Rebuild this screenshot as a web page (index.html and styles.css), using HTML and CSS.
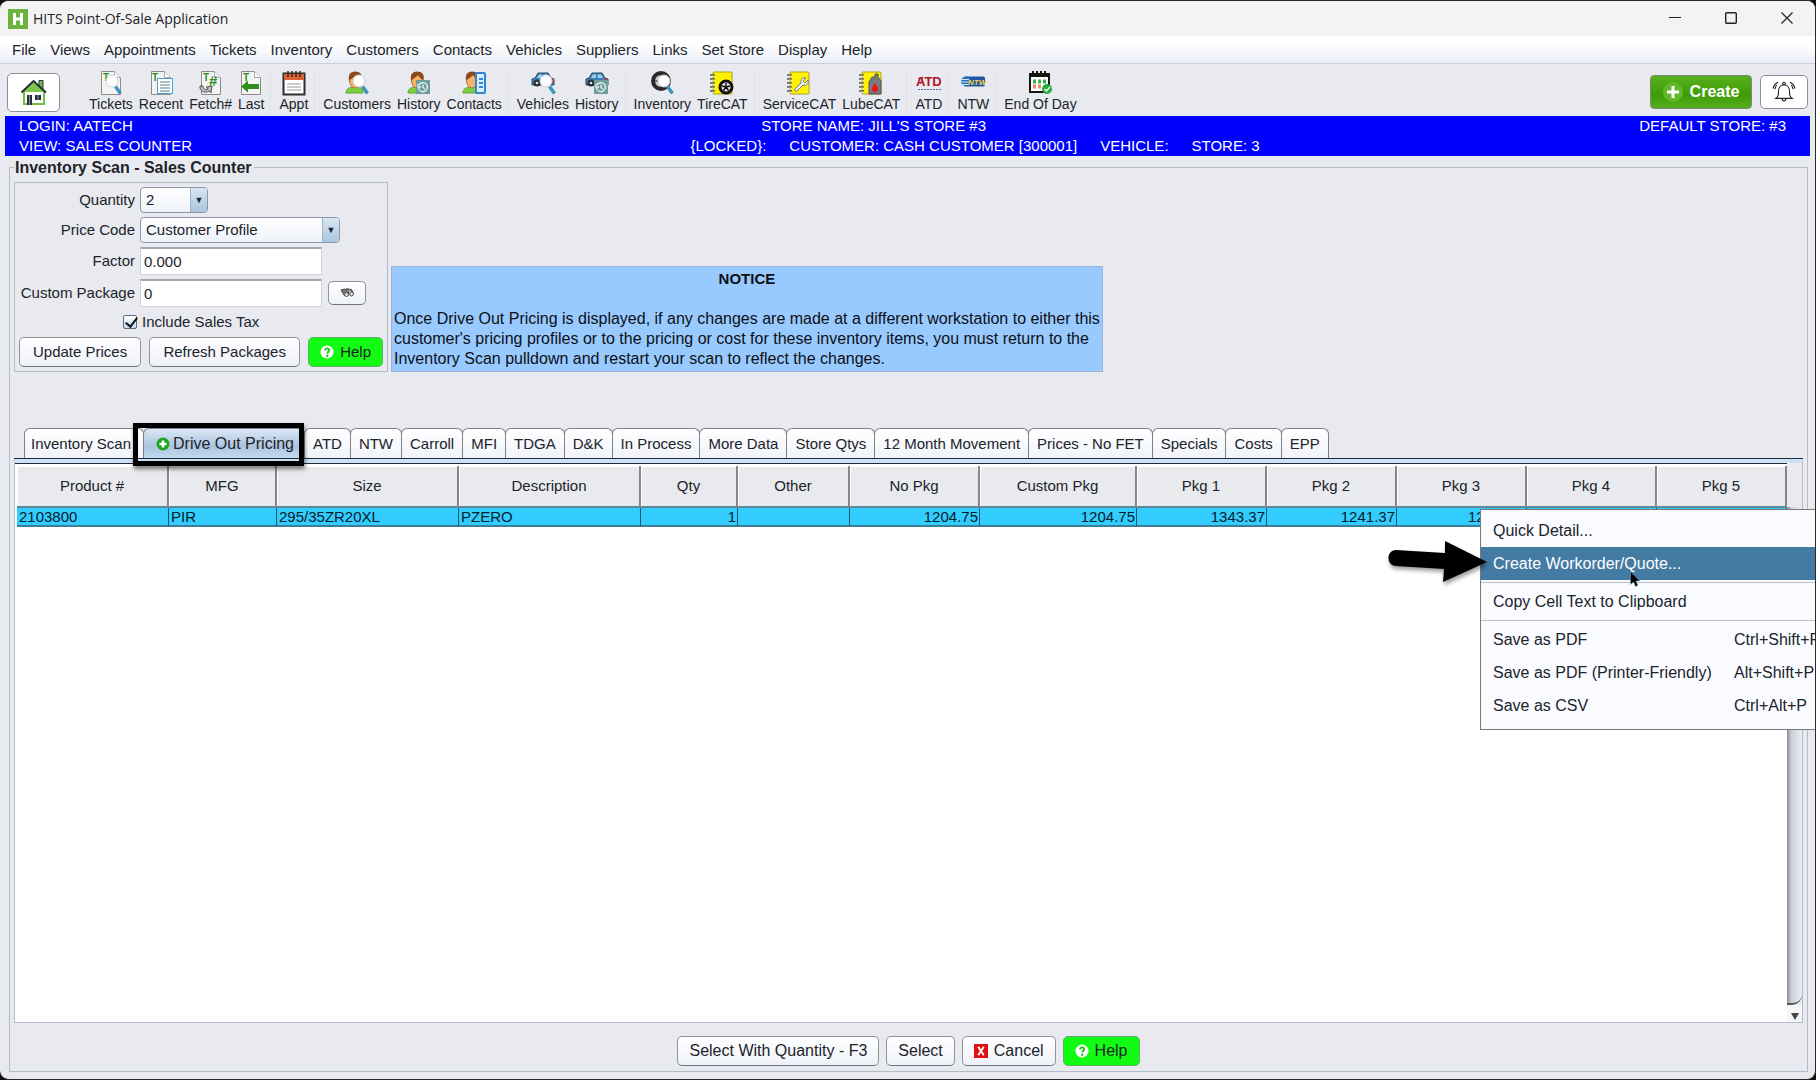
FILE: index.html
```html
<!DOCTYPE html>
<html lang="en">
<head>
<meta charset="UTF-8">
<meta name="viewport" content="width=device-width, initial-scale=1.0">
<title>HITS Point-Of-Sale Application</title>
<link rel="stylesheet" href="styles.css">
</head>
<body>

<!-- shared icon shapes -->
<svg class="sprites" aria-hidden="true">
    <symbol id="page" viewBox="0 0 24 24">
        <path d="M2.500.5h13l6 6v17h-19z" fill="#f4f4f4" stroke="#8b8b8b"/>
        <path d="M15.500.5v6h6" fill="#fff" stroke="#aaa"/>
    </symbol>
    <symbol id="lens" viewBox="0 0 24 24">
        <path d="M16.500 15.500l5 7" stroke="#3f93bd" stroke-width="3.500"/>
        <circle cx="13" cy="10" r="6" fill="#fdfdfd" stroke="#cfd4d8"/>
    </symbol>
    <symbol id="person" viewBox="0 0 24 24">
        <path d="M1 22c0-4 3-6 8-6h3c4 0 6 2 6 6z" fill="#7ccf3f" stroke="#5aa52c"/>
        <ellipse cx="10" cy="9.500" rx="5.500" ry="7.500" fill="#f6b268" stroke="#b5763a"/>
        <path d="M4 10C3 4 5 .5 10 .5s8 3 6.500 9C14 8 12 6 11 4 9 7 6 7 4 10z" fill="#8a4b20"/>
    </symbol>
    <symbol id="clock" viewBox="0 0 24 24">
        <rect x="9" y="9" width="14" height="14" fill="#6f9c9c"/>
        <path d="M12 14a4.500 4.500 0 1 1-.5 3M11 13v3h3M16 13.500v3l2 1.500" fill="none" stroke="#e6f4f2" stroke-width="1.300"/>
    </symbol>
    <symbol id="car" viewBox="0 0 24 24">
        <path d="M4 7l3-5h10l3 5 3 1v6H1V8z" fill="#3d7fb4" stroke="#2a4a63"/>
        <path d="M6 7l2-3.500h3V7zM12.500 7V3.500H16l2 3.500z" fill="#9fd0ee"/>
        <circle cx="6" cy="12" r="3.500" fill="#2b2f33"/><circle cx="6" cy="12" r="1.300" fill="#ddd"/>
        <path d="M20 8h3v3h-3z" fill="#d43a2c"/>
    </symbol>
    <symbol id="book" viewBox="0 0 24 24">
        <rect x="3" y="1" width="19" height="22" rx="1" fill="#fff200" stroke="#aaa01f"/>
        <path d="M0 4h5M0 8h5M0 12h5M0 16h5M0 20h5" stroke="#555" stroke-width="1.500"/>
        <path d="M2 5.200h3M2 9.200h3M2 13.200h3M2 17.200h3M2 21.200h3" stroke="#ddd"/>
    </symbol>
    <symbol id="help" viewBox="0 0 14 14">
        <circle cx="7" cy="7" r="6.500" fill="#fff"/>
        <path d="M5 5.500C5 2.500 9.500 2.800 9.300 5.300 9.200 6.700 7.200 6.800 7.200 8.600" fill="none" stroke="#12c912" stroke-width="1.800"/>
        <circle cx="7.200" cy="10.700" r="1.200" fill="#12c912"/>
    </symbol>
</svg>

<div class="window">
    <header class="title-bar">
        <svg class="app-logo" viewBox="0 0 20 20"><rect width="20" height="20" fill="#6cb33e"/><path d="M6.500 4v12M13.500 4v12M6 10h8" stroke="#fff" stroke-width="3"/></svg>
        <span class="app-name">HITS Point-Of-Sale Application</span>
        <button class="window-button" aria-label="Minimize"><svg viewBox="0 0 12 12"><path d="M0 5.500h12" stroke="#222"/></svg></button>
        <button class="window-button" aria-label="Maximize"><svg viewBox="0 0 12 12"><rect x=".7" y=".7" width="10.600" height="10.600" rx="1" fill="none" stroke="#222" stroke-width="1.400"/></svg></button>
        <button class="window-button" aria-label="Close"><svg viewBox="0 0 12 12"><path d="M.5.5l11 11M11.500.5l-11 11" stroke="#222" stroke-width="1.200"/></svg></button>
    </header>

    <nav class="menu-bar">
        <a href="#">File</a>
        <a href="#">Views</a>
        <a href="#">Appointments</a>
        <a href="#">Tickets</a>
        <a href="#">Inventory</a>
        <a href="#">Customers</a>
        <a href="#">Contacts</a>
        <a href="#">Vehicles</a>
        <a href="#">Suppliers</a>
        <a href="#">Links</a>
        <a href="#">Set Store</a>
        <a href="#">Display</a>
        <a href="#">Help</a>
    </nav>

    <div class="toolbar">
        <button class="home-button" aria-label="Home">
            <svg viewBox="0 0 28 28">
                <path d="M4 13h20v13H4z" fill="#fff" stroke="#6fbf44" stroke-width="2"/>
                <path d="M19 2.500h4V11h-4z" fill="#6fbf44" stroke="#243038"/>
                <path d="M1.500 14L13.500 2l12.500 12z" fill="#79c74c"/>
                <path d="M1.500 14.500L13.500 3 26 14.500" fill="none" stroke="#243038" stroke-width="2"/>
                <path d="M7 17h5v10H7zM15 17h6v5h-6z" fill="#243038"/>
                <path d="M18 17v5M9.500 17v10" stroke="#8a9298"/>
            </svg>
        </button>

        <div class="tools">
            <button class="tool"><svg viewBox="0 0 24 24"><use href="#page"/><text class="tee" x="4" y="10">T</text><use href="#lens"/></svg>Tickets</button>
            <button class="tool"><svg viewBox="0 0 24 24"><use href="#page"/><text class="tee" x="3" y="10">T</text><rect x="8.500" y="7.500" width="15" height="15" fill="#fff" stroke="#4aa3cf"/><path d="M11 11h10M11 14h10M11 17h10M11 20h10" stroke="#5b7a8c"/></svg>Recent</button>
            <button class="tool"><svg viewBox="0 0 24 24"><use href="#page"/><text class="tee" x="4" y="10">T</text><text class="hash" x="10" y="15">#</text><path d="M1 15c-1 5 5 8 9 5l2 2 1-7-6 1 2 2c-3 1-5 0-5-3z" fill="#b9b9b9" stroke="#555"/></svg>Fetch#</button>
            <button class="tool"><svg viewBox="0 0 24 24"><use href="#page"/><text class="tee" x="4" y="10">T</text><path d="M2 15.500l7-6v3.500h11v5H9v3.500z" fill="#2f8f1d"/></svg>Last</button>
            <span class="tool-gap"></span>
            <button class="tool"><svg viewBox="0 0 24 24"><rect x="1.500" y="2.500" width="21" height="21" fill="#fff" stroke="#2d2d2d" stroke-width="2"/><path d="M2 3h20v6H2z" fill="#dd6137"/><path d="M6 0v6M10 0v6M14 0v6M18 0v6" stroke="#3b2620" stroke-width="1.500"/><path d="M5 13h14M5 16h14M5 19h14" stroke="#9a9a9a"/></svg>Appt</button>
            <span class="tool-gap"></span>
            <button class="tool"><svg viewBox="0 0 24 24"><use href="#person"/><use href="#lens" x="1"/></svg>Customers</button>
            <button class="tool"><svg viewBox="0 0 24 24"><use href="#person"/><use href="#clock"/></svg>History</button>
            <button class="tool"><svg viewBox="0 0 24 24"><use href="#person"/><rect x="14" y="2" width="9" height="20" rx="1" fill="#dcefff" stroke="#2f86d6" stroke-width="2"/><path d="M17 8h4M17 12h4M17 16h4" stroke="#2f86d6" stroke-width="2"/></svg>Contacts</button>
            <span class="tool-gap"></span>
            <button class="tool"><svg viewBox="0 0 24 24"><use href="#car"/><use href="#lens" x="2"/></svg>Vehicles</button>
            <button class="tool"><svg viewBox="0 0 24 24"><use href="#car"/><use href="#clock"/></svg>History</button>
            <span class="tool-gap"></span>
            <button class="tool"><svg viewBox="0 0 24 24"><circle cx="11" cy="10" r="8" fill="#ccc" stroke="#2a2a2a" stroke-width="4"/><path d="M11 4v12M5 10h12" stroke="#555" stroke-width="1.500"/><use href="#lens" x="1"/></svg>Inventory</button>
            <button class="tool"><svg viewBox="0 0 24 24"><use href="#book"/><circle cx="16" cy="16" r="6" fill="#e6e6e6" stroke="#111" stroke-width="3"/><path d="M16 12v4l4-1M16 16l2.500 3.500M16 16l-2.500 3.500M16 16l-4-1" stroke="#111" stroke-width="1.500" fill="none"/></svg>TireCAT</button>
            <span class="tool-gap"></span>
            <button class="tool"><svg viewBox="0 0 24 24"><use href="#book"/><path d="M8 18l6-6c-1-4 2-6 5-5l-3 3 2 2 3-3c1 3-1 6-5 5l-6 6c-2 1-3-1-2-2z" fill="#f1f1f1" stroke="#777"/></svg>ServiceCAT</button>
            <button class="tool"><svg viewBox="0 0 24 24"><use href="#book"/><path d="M10 11l3-5h3V3h3v3l3 4v13H10z" fill="#777b7f" stroke="#555"/><path d="M16 12c2 3 3 4 3 6a3 3 0 0 1-6 0c0-2 1-3 3-6z" fill="#f01414"/></svg>LubeCAT</button>
            <span class="tool-gap"></span>
            <button class="tool"><svg viewBox="0 0 24 24"><text class="atd" x="-1" y="15">ATD</text><path d="M1 8l5-2-3 7" fill="none" stroke="#c01e2d"/><path d="M1 18.500h23" stroke="#5b6b9c" stroke-dasharray="2 1"/></svg>ATD</button>
            <span class="tool-gap"></span>
            <button class="tool"><svg viewBox="0 0 24 24"><rect x="3" y="5.500" width="21" height="10" rx="2" fill="#1f57a3"/><circle cx="5" cy="10.500" r="5" fill="#2d6fb9"/><path d="M0 8.500h8M0 11h8M0 13.500h8" stroke="#cfe3f5"/><text class="ntw" x="7" y="14">NTW</text></svg>NTW</button>
            <span class="tool-gap"></span>
            <button class="tool"><svg viewBox="0 0 24 24"><rect x="2" y="3" width="19" height="18" fill="#fff" stroke="#151515" stroke-width="2"/><path d="M1 5h21M5 0v6M9 0v6M13 0v6M17 0v6" stroke="#151515" stroke-width="2"/><path d="M5 10.500h13" stroke="#35b34a" stroke-width="4" stroke-dasharray="3 2"/><path d="M5 15.500h10" stroke="#f0857a" stroke-width="4" stroke-dasharray="3 2"/><circle cx="19" cy="18" r="5" fill="#22a93a"/><path d="M16.500 18l2 2 3.500-4" fill="none" stroke="#fff" stroke-width="1.500"/></svg>End Of Day</button>
        </div>

        <button class="create-button"><svg viewBox="0 0 20 20"><circle cx="10" cy="10" r="10" fill="#62b92b"/><path d="M10 4v12M4 10h12" stroke="#fff" stroke-width="3"/></svg>Create</button>
        <button class="bell-button" aria-label="Notifications">
            <svg viewBox="0 0 24 24" fill="none" stroke="#222" stroke-width="1.200"><path d="M3 20c3-2 3-4 3-8 0-9 12-9 12 0 0 4 0 6 3 8zM10 20.500c0 3 4 3 4 0"/><circle cx="12" cy="4" r="1.500"/><path d="M4 5.500C2.800 7 2.300 8.500 2.200 10M5.500 2.500C2.500 4 .5 6.500 0 9.500M20 5.500c1.200 1.500 1.700 3 1.800 4.500M18.500 2.500C21.500 4 23.500 6.500 24 9.500"/></svg>
        </button>
    </div>

    <div class="status">
        <div class="status-line status-store">
            <span>LOGIN: AATECH</span>
            <span>STORE NAME: JILL'S STORE #3</span>
            <span>DEFAULT STORE: #3</span>
        </div>
        <div class="status-line status-view">
            <span>VIEW: SALES COUNTER</span>
            <span class="status-fields"><span>{LOCKED}:</span><span>CUSTOMER: CASH CUSTOMER [300001]</span><span>VEHICLE:</span><span>STORE: 3</span></span>
        </div>
    </div>

    <fieldset class="scan">
        <legend>Inventory Scan - Sales Counter</legend>

        <div class="scan-top">
            <form class="pricing">
                <label for="quantity">Quantity</label>
                <div class="field"><span class="combo combo-small"><select id="quantity"><option>2</option></select></span></div>
                <label for="price-code">Price Code</label>
                <div class="field"><span class="combo"><select id="price-code"><option>Customer Profile</option></select></span></div>
                <label for="factor">Factor</label>
                <div class="field"><input class="text-box" type="text" id="factor" value="0.000"></div>
                <label for="package">Custom Package</label>
                <div class="field">
                    <input class="text-box" type="text" id="package" value="0">
                    <button class="btn find-button" type="button" aria-label="Find package"><svg viewBox="0 0 14 10"><path d="M1 2l4-1 4 3-2 4-3-1z" fill="#777" stroke="#444"/><circle cx="6.500" cy="6.500" r="2" fill="#ddd" stroke="#555"/><path d="M6 1l5 1 2 3" fill="none" stroke="#666" stroke-width="2"/><circle cx="11.500" cy="6" r="2" fill="#ddd" stroke="#555"/></svg></button>
                </div>
                <div class="tax-row"><input type="checkbox" id="tax" checked><label for="tax">Include Sales Tax</label></div>
                <div class="pricing-buttons">
                    <button class="btn btn-wide" type="button">Update Prices</button>
                    <button class="btn btn-wide" type="button">Refresh Packages</button>
                    <button class="btn btn-help" type="button"><svg viewBox="0 0 14 14"><use href="#help"/></svg>Help</button>
                </div>
            </form>

            <div class="notice">
                <h2>NOTICE</h2>
                <p>Once Drive Out Pricing is displayed, if any changes are made at a different workstation to either this<br>customer's pricing profiles or to the pricing or cost for these inventory items, you must return to the<br>Inventory Scan pulldown and restart your scan to reflect the changes.</p>
            </div>
        </div>

        <div class="tabs">
            <button class="tab tab-scan">Inventory Scan</button>
            <button class="tab tab-active">
                <svg viewBox="0 0 14 14"><circle cx="7" cy="7" r="6.500" fill="#1fa81f"/><path d="M7 3.500v7M3.500 7h7" stroke="#fff" stroke-width="2.500"/></svg>Drive Out Pricing
                <span class="highlight-box"></span>
            </button>
            <button class="tab">ATD</button>
            <button class="tab">NTW</button>
            <button class="tab">Carroll</button>
            <button class="tab">MFI</button>
            <button class="tab">TDGA</button>
            <button class="tab">D&amp;K</button>
            <button class="tab">In Process</button>
            <button class="tab">More Data</button>
            <button class="tab">Store Qtys</button>
            <button class="tab">12 Month Movement</button>
            <button class="tab">Prices - No FET</button>
            <button class="tab">Specials</button>
            <button class="tab">Costs</button>
            <button class="tab">EPP</button>
        </div>

        <div class="results">
            <div class="grid-area">
                <table>
                    <thead>
                        <tr>
                            <th class="col-product">Product #</th>
                            <th class="col-mfg">MFG</th>
                            <th class="col-size">Size</th>
                            <th class="col-size">Description</th>
                            <th class="col-qty">Qty</th>
                            <th class="col-other">Other</th>
                            <th class="col-pkg">No Pkg</th>
                            <th class="col-custom">Custom Pkg</th>
                            <th class="col-pkg">Pkg 1</th>
                            <th class="col-pkg">Pkg 2</th>
                            <th class="col-pkg">Pkg 3</th>
                            <th class="col-pkg">Pkg 4</th>
                            <th class="col-pkg">Pkg 5</th>
                        </tr>
                    </thead>
                    <tbody>
                        <tr>
                            <td>2103800</td>
                            <td>PIR</td>
                            <td>295/35ZR20XL</td>
                            <td>PZERO</td>
                            <td class="number">1</td>
                            <td></td>
                            <td class="number">1204.75</td>
                            <td class="number">1204.75</td>
                            <td class="number">1343.37</td>
                            <td class="number">1241.37</td>
                            <td class="cut">12</td>
                            <td></td>
                            <td></td>
                        </tr>
                    </tbody>
                </table>
            </div>
            <div class="scrollbar">
                <div class="track"></div>
                <button class="scroll-down" aria-label="Scroll down"><svg viewBox="0 0 8 8"><path d="M0 1h8L4 8z" fill="#444"/></svg></button>
            </div>
        </div>

        <div class="actions">
            <button class="btn">Select With Quantity - F3</button>
            <button class="btn">Select</button>
            <button class="btn"><svg viewBox="0 0 15 15"><rect width="15" height="15" fill="#e01010"/><path d="M4.500 3l6 9M10.500 3l-6 9" stroke="#fff" stroke-width="2"/></svg>Cancel</button>
            <button class="btn btn-help"><svg viewBox="0 0 14 14"><use href="#help"/></svg>Help</button>
        </div>
    </fieldset>

    <div class="context-menu">
        <button>Quick Detail...</button>
        <button class="selected">Create Workorder/Quote...</button>
        <hr>
        <button>Copy Cell Text to Clipboard</button>
        <hr>
        <button>Save as PDF<span>Ctrl+Shift+P</span></button>
        <button>Save as PDF (Printer-Friendly)<span>Alt+Shift+P</span></button>
        <button>Save as CSV<span>Ctrl+Alt+P</span></button>
    </div>
    <svg class="arrow" viewBox="0 0 100 44"><path d="M8 10l49 3V1l42 21-44 20 1-13-48-3C-2 26-2 10 8 10z"/></svg>
    <svg class="cursor" viewBox="0 0 10 16"><path d="M.5.5v13l3-2.500 2 4.500 2.500-1-2-4.500h4z" fill="#000" stroke="#8fb4cf" stroke-width=".5"/></svg>
</div>

</body>
</html>
```
FILE: styles.css
```css
* {
    box-sizing: border-box;
}

body, html {
    margin: 0;
    padding: 0;
    height: 100%;
    background-color: #111;
    color: #20232a;
    font-family: "Liberation Sans", Arial, sans-serif;
    font-size: 15px;
    line-height: 20px;
}

button, input, select {
    font: inherit;
    color: inherit;
}

button {
    border: 0;
    padding: 0;
    background: none;
    white-space: nowrap;
}

a {
    color: inherit;
    text-decoration: none;
}

.sprites {
    display: none;
}

.window {
    position: relative;
    display: flex;
    flex-direction: column;
    height: 100vh;
    border: 1px solid #2b282c;
    border-left: 0;
    border-radius: 9px;
    background-color: #e8eaef;
    overflow: hidden;
}

/* title bar and menus */
.title-bar {
    display: flex;
    align-items: center;
    height: 35px;
    padding-left: 8px;
    background-color: #f3f3f3;
}

.app-logo {
    width: 20px;
    height: 20px;
}

.app-name {
    flex: 1;
    margin-left: 5px;
    font-family: "Open Sans", sans-serif;
    font-size: 14px;
}

.window-button {
    width: 56px;
}

.window-button svg {
    width: 12px;
    height: 12px;
}

.menu-bar {
    display: flex;
    gap: 14px;
    height: 28px;
    padding: 4px 12px;
    border-bottom: 1px solid #c9ced9;
    background: linear-gradient(#fff 30%, #e9edf5);
}

.toolbar {
    display: flex;
    align-items: center;
    height: 52px;
    padding: 4px 7px 0;
}

.home-button, .bell-button {
    border: 1px solid #8d9097;
    border-radius: 5px;
    background-color: #fff;
}

.home-button {
    width: 53px;
    height: 39px;
}

.home-button svg {
    width: 28px;
    height: 28px;
    margin-top: 4px;
}

.tools {
    flex: 1;
    display: flex;
    gap: 6px;
    margin-left: 29px;
}

.tool {
    display: flex;
    flex-direction: column;
    align-items: center;
    font-size: 14px;
    line-height: 18px;
}

.tool svg {
    width: 24px;
    height: 24px;
    overflow: visible;
}

.tool-gap {
    width: 3px;
    border-left: 1px solid #e1e3e8;
}

.tee {
    font-size: 10px;
    font-weight: bold;
    fill: #2f8f1d;
}

.hash {
    font-size: 15px;
    font-weight: bold;
    fill: #2f8f1d;
}

.atd {
    font-size: 13px;
    font-weight: bold;
    fill: #b01527;
}

.ntw {
    font-size: 8px;
    font-weight: bold;
    font-style: italic;
    fill: #f5d24a;
}

.create-button {
    display: flex;
    align-items: center;
    justify-content: center;
    gap: 7px;
    width: 102px;
    height: 34px;
    margin-right: 8px;
    border: 1px solid #7d8b76;
    border-radius: 4px;
    background: linear-gradient(#57b01c, #3f9c07 60%, #55ad1e);
    color: #fff;
    font-size: 16px;
    font-weight: bold;
}

.create-button svg {
    width: 20px;
    height: 20px;
}

.bell-button {
    width: 48px;
    height: 34px;
}

.bell-button svg {
    width: 22px;
    height: 24px;
    margin-top: 3px;
    overflow: visible;
}

/* blue status band */
.status {
    height: 40px;
    margin: 0 5px;
    padding: 0 24px 0 14px;
    background-color: #0000ff;
    color: #fff;
}

.status-line {
    display: grid;
}

.status-store {
    grid-template-columns: 42% 1fr auto;
}

.status-view {
    grid-template-columns: 38% 1fr;
}

.status-fields {
    display: flex;
    gap: 23px;
}

/* scan panel */
.scan {
    flex: 1;
    display: flex;
    flex-direction: column;
    min-width: 0;
    min-height: 0;
    margin: 0 7px 7px 9px;
    padding: 3px 4px 0;
    border: 1px solid #b4bac8;
}

.scan legend {
    padding: 0 2px 0 1px;
    font-size: 16px;
    line-height: 23px;
    font-weight: bold;
}

.scan-top {
    display: flex;
    align-items: flex-end;
    gap: 3px;
}

.pricing {
    display: grid;
    grid-template-columns: 117px auto;
    column-gap: 5px;
    row-gap: 4px;
    align-items: center;
    width: 374px;
    padding: 4px;
    padding-left: 3px;
    border: 1px solid #b4bac8;
}

.pricing label {
    text-align: right;
    white-space: nowrap;
}

.field {
    display: flex;
    align-items: center;
    gap: 6px;
}

.combo {
    position: relative;
    width: 200px;
    height: 26px;
    border: 1px solid #8e97a8;
    border-radius: 4px;
    background: linear-gradient(#fff, #eef2f9);
    overflow: hidden;
}

.combo::after {
    content: "\25BC";
    position: absolute;
    top: 0;
    right: 0;
    width: 16px;
    height: 24px;
    border-left: 1px solid #9fb3c8;
    background: linear-gradient(#d7e6f3, #a9c5df);
    font-size: 9px;
    line-height: 24px;
    text-align: center;
    pointer-events: none;
}

.combo-small {
    width: 68px;
}

.combo select {
    width: 100%;
    height: 24px;
    padding: 0 5px;
    border: 0;
    background: transparent;
    appearance: none;
}

.text-box {
    width: 182px;
    height: 28px;
    padding: 0 3px;
    border: 1px solid #d0d3da;
    border-top: 2px solid #a3a6ad;
    background-color: #fff;
}

.btn {
    display: flex;
    align-items: center;
    justify-content: center;
    gap: 6px;
    height: 30px;
    padding: 0 11px;
    border: 1px solid #8f939c;
    border-bottom-color: #6f737b;
    border-radius: 5px;
    background: linear-gradient(#fff, #eef1f8);
}

.btn svg {
    width: 14px;
    height: 14px;
}

.btn-wide {
    padding: 0 13px;
}

.btn-help {
    border-color: #5fae6a;
    background: #12fb12;
}

.find-button {
    width: 38px;
    height: 24px;
    padding: 0;
}

.tax-row {
    grid-column: 1 / -1;
    display: flex;
    align-items: center;
    gap: 5px;
    height: 22px;
    padding-left: 105px;
}

.tax-row input {
    appearance: none;
    width: 14px;
    height: 14px;
    margin: 0;
    border: 1px solid #5c6b80;
    border-radius: 2px;
    background: linear-gradient(#fff, #c4d8ec);
}

.tax-row input:checked::before {
    content: "";
    display: block;
    width: 5px;
    height: 10px;
    margin: -1px 0 0 4px;
    border: solid #111;
    border-width: 0 2px 2px 0;
    transform: rotate(38deg);
}

.pricing-buttons {
    grid-column: 1 / -1;
    display: flex;
    justify-content: space-between;
    padding-left: 1px;
}

.notice {
    padding: 2px;
    border: 1px solid #9db4d6;
    background-color: #99caff;
    color: #0c0f14;
    font-size: 16px;
}

.notice h2 {
    margin: 0 0 20px;
    font-size: 15px;
    text-align: center;
}

.notice p {
    margin: 0;
}

/* tabs and result table */
.tabs {
    display: flex;
    align-items: flex-end;
    margin-top: 56px;
    padding-left: 10px;
    border-bottom: 1px solid #1d2b3a;
}

.tab {
    height: 30px;
    margin-right: -1px;
    padding: 0 8px;
    border: 1px solid #7d8088;
    border-bottom: 0;
    border-radius: 6px 6px 0 0;
    background: linear-gradient(#fff, #f0f3fa);
}

.tab-scan {
    padding-right: 12px;
    padding-left: 6px;
}

.tab-active {
    position: relative;
    display: flex;
    align-items: center;
    gap: 3px;
    padding: 0 10px 0 12px;
    background: linear-gradient(#dbe8f5, #abc4de 60%, #c3daf0);
    font-size: 16px;
}

.tab-active svg {
    width: 14px;
    height: 14px;
}

/* sits over the active tab and its neighbours */
.highlight-box {
    position: absolute;
    top: -6px;
    right: 0;
    bottom: -8px;
    left: -11px;
    z-index: 2;
    border: 5px solid #000;
    box-shadow: 1px 3px 4px rgba(0, 0, 0, 0.5);
}

.results {
    flex: 1;
    display: flex;
    min-height: 0;
    border: 1px solid #b4bac8;
    border-top: 4px solid #cfe0f2;
    background-color: #fff;
    box-shadow: inset 0 1px #1d2b3a;
}

.grid-area {
    flex: 1;
    padding: 3px 0 0 2px;
}

table {
    width: 100%;
    table-layout: fixed;
    border-collapse: separate;
    border-spacing: 0;
}

th {
    height: 42px;
    padding: 0;
    border-right: 2px solid #85878c;
    border-bottom: 2px solid #5d8a98;
    background-color: #e8eaed;
    box-shadow: inset 1px 1px #fff;
    font-weight: normal;
}

td {
    height: 19px;
    padding: 0 1px 0 2px;
    border-right: 1px solid #16566b;
    border-bottom: 2px solid #3b7e96;
    background-color: #33ccff;
    color: #052028;
    line-height: 17px;
}

.number {
    text-align: right;
}

.cut {
    padding-left: 71px;
}

.col-product { width: 152px; }
.col-mfg { width: 108px; }
.col-size { width: 182px; }
.col-qty { width: 97px; }
.col-other { width: 112px; }
.col-custom { width: 157px; }
.col-pkg { width: 130px; }

.scrollbar {
    display: flex;
    flex-direction: column;
    width: 16px;
    padding-top: 1px;
    background-color: #e8eaef;
}

.track {
    flex: 1;
    margin-top: 43px;
    border-bottom: 2px solid #55575c;
    border-radius: 0 0 10px 0;
    background: linear-gradient(90deg, #8a8d94, #cdd0d8 30%, #eceef3);
}

.scroll-down {
    height: 17px;
    background-color: #f4f6fa;
}

.scroll-down svg {
    width: 8px;
    height: 8px;
}

.actions {
    display: flex;
    justify-content: center;
    gap: 7px;
    padding: 13px 0 5px;
    font-size: 16px;
}

/* right-click menu, runs past the edge of the window */
.context-menu {
    position: absolute;
    top: 508px;
    right: -20px;
    width: 355px;
    padding: 4px 0 7px;
    border: 1px solid #77797e;
    background-color: #fafbff;
    font-size: 16px;
}

.context-menu button {
    display: flex;
    width: 100%;
    height: 33px;
    padding-left: 12px;
    align-items: center;
}

.context-menu span {
    position: absolute;
    left: 253px;
}

.context-menu .selected {
    background-color: #437ba3;
    color: #fff;
}

.context-menu hr {
    height: 1px;
    margin: 2px 0;
    border: 0;
    background-color: #bcc0c8;
}

.arrow {
    position: absolute;
    top: 539px;
    right: 327px;
    width: 100px;
    height: 44px;
    filter: drop-shadow(1px 3px 2px rgba(0, 0, 0, 0.4));
}

.cursor {
    position: absolute;
    top: 570px;
    right: 175px;
    width: 10px;
    height: 16px;
}
```
